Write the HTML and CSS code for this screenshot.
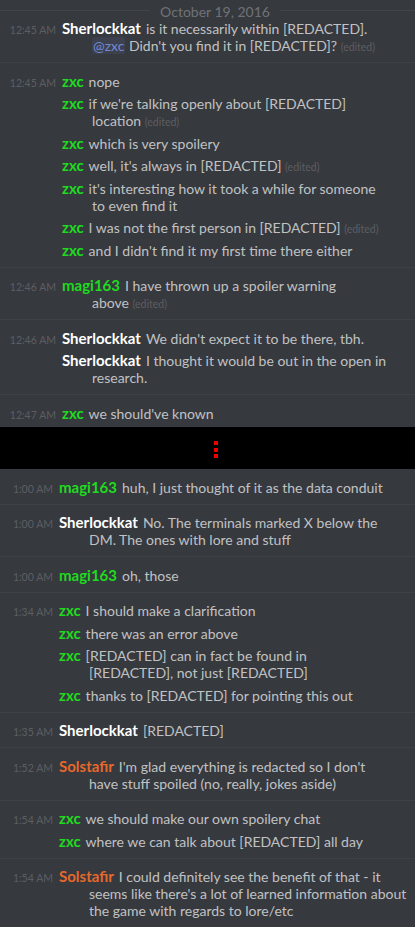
FILE: index.html
```html
<!DOCTYPE html>
<html lang="en">
<head>
<meta charset="utf-8">
<title>Chat log</title>
<link rel="stylesheet" href="styles.css">
</head>
<body>
<main class="chat">
  <section class="pane pane-top">
    <div class="date-divider"><span>October 19, 2016</span></div>

    <div class="group">
      <div class="msg"><span class="ts">12:45 AM</span><div class="body"><span class="user u-white">Sherlockkat</span>is it necessarily within [REDACTED].<br><span class="mention">@zxc</span> Didn't you find it in [REDACTED]? <span class="edited">(edited)</span></div></div>
    </div>

    <div class="group">
      <div class="msg"><span class="ts">12:45 AM</span><div class="body"><span class="user u-green">zxc</span>nope</div></div>
      <div class="msg"><span class="ts"></span><div class="body"><span class="user u-green">zxc</span>if we're talking openly about [REDACTED]<br>location <span class="edited">(edited)</span></div></div>
      <div class="msg"><span class="ts"></span><div class="body"><span class="user u-green">zxc</span>which is very spoilery</div></div>
      <div class="msg"><span class="ts"></span><div class="body"><span class="user u-green">zxc</span>well, it's always in [REDACTED] <span class="edited">(edited)</span></div></div>
      <div class="msg"><span class="ts"></span><div class="body"><span class="user u-green">zxc</span>it's interesting how it took a while for someone<br>to even find it</div></div>
      <div class="msg"><span class="ts"></span><div class="body"><span class="user u-green">zxc</span>I was not the first person in [REDACTED] <span class="edited">(edited)</span></div></div>
      <div class="msg"><span class="ts"></span><div class="body"><span class="user u-green">zxc</span>and I didn't find it my first time there either</div></div>
    </div>

    <div class="group">
      <div class="msg"><span class="ts">12:46 AM</span><div class="body"><span class="user u-green">magi163</span>I have thrown up a spoiler warning<br>above <span class="edited">(edited)</span></div></div>
    </div>

    <div class="group">
      <div class="msg"><span class="ts">12:46 AM</span><div class="body"><span class="user u-white">Sherlockkat</span>We didn't expect it to be there, tbh.</div></div>
      <div class="msg"><span class="ts"></span><div class="body"><span class="user u-white">Sherlockkat</span>I thought it would be out in the open in<br>research.</div></div>
    </div>

    <div class="group">
      <div class="msg"><span class="ts">12:47 AM</span><div class="body"><span class="user u-green">zxc</span>we should've known</div></div>
    </div>
  </section>

  <div class="cut" aria-label="time skipped"><span class="dots"><i></i><i></i><i></i></span></div>

  <section class="pane pane-bottom">
    <div class="group">
      <div class="msg"><span class="ts">1:00 AM</span><div class="body"><span class="user u-green">magi163</span>huh, I just thought of it as the data conduit</div></div>
    </div>

    <div class="group">
      <div class="msg"><span class="ts">1:00 AM</span><div class="body"><span class="user u-white">Sherlockkat</span>No. The terminals marked X below the<br>DM. The ones with lore and stuff</div></div>
    </div>

    <div class="group">
      <div class="msg"><span class="ts">1:00 AM</span><div class="body"><span class="user u-green">magi163</span>oh, those</div></div>
    </div>

    <div class="group">
      <div class="msg"><span class="ts">1:34 AM</span><div class="body"><span class="user u-green">zxc</span>I should make a clarification</div></div>
      <div class="msg"><span class="ts"></span><div class="body"><span class="user u-green">zxc</span>there was an error above</div></div>
      <div class="msg"><span class="ts"></span><div class="body"><span class="user u-green">zxc</span>[REDACTED] can in fact be found in<br>[REDACTED], not just [REDACTED]</div></div>
      <div class="msg"><span class="ts"></span><div class="body"><span class="user u-green">zxc</span>thanks to [REDACTED] for pointing this out</div></div>
    </div>

    <div class="group">
      <div class="msg"><span class="ts">1:35 AM</span><div class="body"><span class="user u-white">Sherlockkat</span>[REDACTED]</div></div>
    </div>

    <div class="group">
      <div class="msg"><span class="ts">1:52 AM</span><div class="body"><span class="user u-orange">Solstafir</span>I'm glad everything is redacted so I don't<br>have stuff spoiled (no, really, jokes aside)</div></div>
    </div>

    <div class="group">
      <div class="msg"><span class="ts">1:54 AM</span><div class="body"><span class="user u-green">zxc</span>we should make our own spoilery chat</div></div>
      <div class="msg"><span class="ts"></span><div class="body"><span class="user u-green">zxc</span>where we can talk about [REDACTED] all day</div></div>
    </div>

    <div class="group">
      <div class="msg"><span class="ts">1:54 AM</span><div class="body"><span class="user u-orange">Solstafir</span>I could definitely see the benefit of that - it<br>seems like there's a lot of learned information about<br>the game with regards to lore/etc</div></div>
    </div>
  </section>
</main>
</body>
</html>
```

FILE: styles.css
```css
* {
  box-sizing: border-box;
}

html,
body {
  margin: 0;
  padding: 0;
  background: #36393e;
}

body {
  width: 415px;
  height: 927px;
  overflow: hidden;
  font-family: Lato, "Noto Sans", sans-serif;
  font-size: 14px;
  line-height: 17px;
  color: rgba(255, 255, 255, 0.7);
}

.chat {
  display: flex;
  flex-direction: column;
}

.pane {
  overflow: hidden;
}

.pane-top {
  height: 427px;
  flex-shrink: 0;
}

/* date separator */
.date-divider {
  display: flex;
  align-items: center;
  gap: 10px;
  height: 20px;
  margin-right: -15px;
  font-size: 14px;
  line-height: 20px;
  color: rgba(255, 255, 255, 0.3);
}

.date-divider span {
  padding-top: 3px;
}

.date-divider::before,
.date-divider::after {
  content: "";
  flex: 1;
  height: 1px;
  background: rgba(255, 255, 255, 0.06);
}

/* message groups */
.group {
  display: flex;
  flex-direction: column;
  gap: 5.5px;
  padding: 9.5px 0 8px;
  border-top: 1px solid rgba(255, 255, 255, 0.045);
}

.date-divider + .group {
  border-top: 0;
  padding-top: 0;
}

.pane-bottom .group:first-child {
  border-top: 0;
}

.msg {
  display: flex;
  align-items: baseline;
}

.ts {
  flex-shrink: 0;
  width: 56px;
  margin-right: 6px;
  text-align: right;
  font-size: 10.5px;
  line-height: 1;
  color: rgba(255, 255, 255, 0.2);
  white-space: nowrap;
}

.pane-bottom .ts {
  width: 53px;
}

.body {
  flex: 1;
  min-width: 0;
  padding-left: 30px;
  text-indent: -30px;
  white-space: nowrap;
}

.user {
  margin-right: 5px;
  font-size: 15px;
  line-height: 1;
  font-weight: 700;
}

.u-white {
  color: #ffffff;
}

.u-green {
  color: #1fdb1f;
}

.u-orange {
  color: #e6682b;
}

.mention {
  padding: 0 1px;
  border-radius: 2px;
  line-height: 1;
  color: #7289da;
  background: rgba(115, 139, 218, 0.1);
}

.edited {
  font-size: 10.5px;
  line-height: 1;
  color: rgba(255, 255, 255, 0.2);
}

/* skipped-time band */
.cut {
  display: flex;
  justify-content: center;
  align-items: center;
  height: 42px;
  flex-shrink: 0;
  padding: 3px 0 0 17px;
  background: #000;
}

.dots {
  display: flex;
  flex-direction: column;
  gap: 2.5px;
}

.dots i {
  display: block;
  width: 4px;
  height: 4px;
  background: #ee0000;
}
```
